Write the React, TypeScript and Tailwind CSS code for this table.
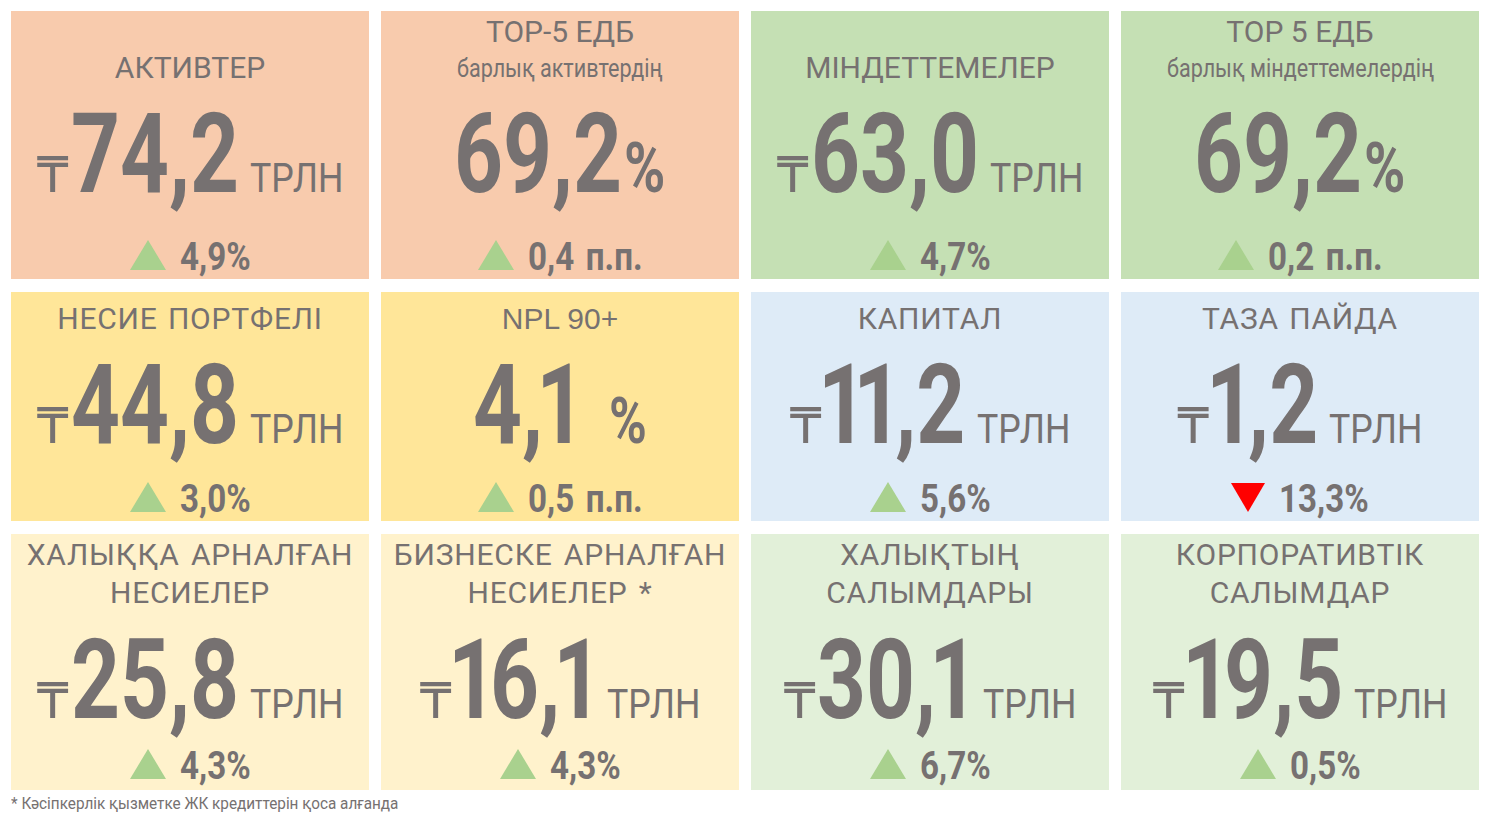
import React, { useLayoutEffect, useRef, useState } from 'react';

function Sq({ cls, oc = '', children }: { cls: string; oc?: string; children: React.ReactNode }) {
  const ref = useRef<HTMLSpanElement>(null);
  const [w, setW] = useState<number | undefined>(undefined);
  useLayoutEffect(() => {
    const m = () => {
      if (ref.current) setW(ref.current.getBoundingClientRect().width);
    };
    m();
    if (document.fonts) document.fonts.ready.then(m);
  }, []);
  return (
    <span className={`inline-block whitespace-nowrap ${oc}`} style={{ width: w }}>
      <span ref={ref} className={`inline-block whitespace-nowrap origin-left ${cls}`}>
        {children}
      </span>
    </span>
  );
}

type C = {
  bg: string;
  row: 1 | 2 | 3;
  t: string[];
  sub?: string;
  npl?: boolean;
  v: string;
  cur: boolean;
  unit: 'trln' | 'pct' | 'pct2';
  d: string;
  down?: boolean;
};

const cards: C[] = [
  { bg: 'bg-[#F8CBAD]', row: 1, t: ['АКТИВТЕР'], v: '74,2', cur: true, unit: 'trln', d: '4,9%' },
  { bg: 'bg-[#F8CBAD]', row: 1, t: ['ТОР-5 ЕДБ'], sub: 'барлық активтердің', v: '69,2', cur: false, unit: 'pct', d: '0,4 п.п.' },
  { bg: 'bg-[#C5E0B4]', row: 1, t: ['МІНДЕТТЕМЕЛЕР'], v: '63,0', cur: true, unit: 'trln', d: '4,7%' },
  { bg: 'bg-[#C5E0B4]', row: 1, t: ['ТОР 5 ЕДБ'], sub: 'барлық міндеттемелердің', v: '69,2', cur: false, unit: 'pct', d: '0,2 п.п.' },
  { bg: 'bg-[#FFE699]', row: 2, t: ['НЕСИЕ ПОРТФЕЛІ'], v: '44,8', cur: true, unit: 'trln', d: '3,0%' },
  { bg: 'bg-[#FFE699]', row: 2, t: ['NPL 90+'], npl: true, v: '4,1', cur: false, unit: 'pct2', d: '0,5 п.п.' },
  { bg: 'bg-[#DEEBF7]', row: 2, t: ['КАПИТАЛ'], v: '11,2', cur: true, unit: 'trln', d: '5,6%' },
  { bg: 'bg-[#DEEBF7]', row: 2, t: ['ТАЗА ПАЙДА'], v: '1,2', cur: true, unit: 'trln', d: '13,3%', down: true },
  { bg: 'bg-[#FFF2CC]', row: 3, t: ['ХАЛЫҚҚА АРНАЛҒАН', 'НЕСИЕЛЕР'], v: '25,8', cur: true, unit: 'trln', d: '4,3%' },
  { bg: 'bg-[#FFF2CC]', row: 3, t: ['БИЗНЕСКЕ АРНАЛҒАН', 'НЕСИЕЛЕР *'], v: '16,1', cur: true, unit: 'trln', d: '4,3%' },
  { bg: 'bg-[#E2F0D9]', row: 3, t: ['ХАЛЫҚТЫҢ', 'САЛЫМДАРЫ'], v: '30,1', cur: true, unit: 'trln', d: '6,7%' },
  { bg: 'bg-[#E2F0D9]', row: 3, t: ['КОРПОРАТИВТІК', 'САЛЫМДАР'], v: '19,5', cur: true, unit: 'trln', d: '0,5%' },
];

function Title({ c }: { c: C }) {
  if (c.row === 1) {
    if (c.sub) {
      return (
        <div className="h-[88px] pt-[6px] flex flex-col items-center leading-none">
          <span className="text-[30px] leading-none">{c.t[0]}</span>
          <Sq oc="mt-[8px] text-[26px] leading-none" cls="text-[26px] leading-none scale-x-[0.83]">
            {c.sub}
          </Sq>
        </div>
      );
    }
    return (
      <div className="h-[88px] pt-[42px] flex flex-col items-center">
        <span className="text-[30px] leading-none">{c.t[0]}</span>
      </div>
    );
  }
  if (c.row === 2) {
    return (
      <div className="h-[58px] pt-[12px] flex flex-col items-center">
        <span
          className={
            c.npl
              ? "text-[30px] leading-none font-['Liberation_Sans',sans-serif]"
              : 'text-[30px] leading-none tracking-[0.8px] [word-spacing:2px]'
          }
        >
          {c.t[0]}
        </span>
      </div>
    );
  }
  return (
    <div className="h-[91px] pt-[2px] flex flex-col items-center text-[30px] leading-[38px] tracking-[0.8px] [word-spacing:3px]">
      {c.t.map((l) => (
        <span key={l} className="whitespace-nowrap">
          {l}
        </span>
      ))}
    </div>
  );
}

function BigValue({ v }: { v: string }) {
  return (
    <>
      {v.split('').map((ch, i) => {
        const n = (ch === '1' ? 1 : 0) + (v[i + 1] === '1' ? 1 : 0);
        const cls = n === 2 ? 'tracking-[-18px]' : n === 1 ? 'tracking-[-9px]' : '';
        return (
          <span key={i} className={cls}>
            {ch}
          </span>
        );
      })}
    </>
  );
}

function Card({ c }: { c: C }) {
  const deltaMt = c.row === 1 ? 'mt-[28px]' : c.row === 2 ? 'mt-[19px]' : 'mt-[11px]';
  const tengeCls =
    c.v[0] === '1'
      ? "font-['DejaVu_Sans',sans-serif] text-[50px] leading-none tracking-[-3px]"
      : "font-['DejaVu_Sans',sans-serif] text-[50px] leading-none tracking-[2px]";
  return (
    <div className={`flex flex-col items-center ${c.bg}`}>
      <Title c={c} />
      <div className="flex items-baseline h-[111px] leading-none">
        {c.cur && <span className={tengeCls}>₸</span>}
        <Sq oc="text-[111px] leading-none" cls="font-bold text-[111px] leading-none scale-x-[0.77]">
          <BigValue v={c.v} />
        </Sq>
        {c.unit === 'trln' && (
          <Sq oc="ml-[11px] text-[41px] leading-none" cls="text-[41px] leading-none scale-x-[0.87]">
            ТРЛН
          </Sq>
        )}
        {c.unit === 'pct' && (
          <Sq oc="ml-[2px] text-[70px] leading-none" cls="font-bold text-[70px] leading-none scale-x-[0.8]">
            %
          </Sq>
        )}
        {c.unit === 'pct2' && (
          <Sq oc="ml-[31px] text-[64px] leading-none" cls="font-bold text-[64px] leading-none scale-x-[0.8]">
            %
          </Sq>
        )}
      </div>
      <div className={`flex items-baseline leading-none ${deltaMt}`}>
        {c.down ? (
          <svg width="34" height="29" viewBox="0 0 34 29" className="block">
            <polygon points="0,0 34,0 17,29" fill="#FF0000" />
          </svg>
        ) : (
          <svg width="36" height="30" viewBox="0 0 36 30" className="block">
            <polygon points="18,0 36,30 0,30" fill="#A9D18E" />
          </svg>
        )}
        <Sq oc="ml-[14px] text-[39px] leading-none" cls="font-bold text-[39px] leading-none scale-x-[0.85] [word-spacing:4px]">
          {c.d}
        </Sq>
      </div>
    </div>
  );
}

export default function App() {
  return (
    <div className="w-[1489px] h-[819px] bg-white overflow-hidden font-['Roboto',sans-serif] text-[#767171]">
      <div className="grid grid-cols-[repeat(4,358px)] grid-rows-[268px_229px_256px] gap-x-[12px] gap-y-[13px] pt-[11px] pl-[11px]">
        {cards.map((c, i) => (
          <Card key={i} c={c} />
        ))}
      </div>
      <div className="pl-[11px] mt-[5px] leading-none text-[17px]">
        <Sq oc="text-[17px] leading-none" cls="text-[17px] leading-none scale-x-[0.9]">
          * Кәсіпкерлік қызметке ЖК кредиттерін қоса алғанда
        </Sq>
      </div>
    </div>
  );
}
